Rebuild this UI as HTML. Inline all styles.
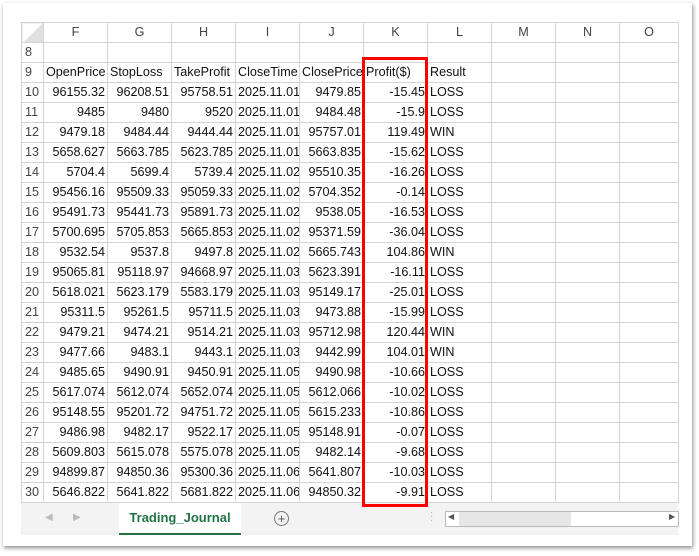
<!DOCTYPE html><html><head><style>
body{margin:0;width:699px;height:556px;background:#fff;position:relative;overflow:hidden;font-family:"Liberation Sans",sans-serif;}
.card{position:absolute;left:3px;top:3px;width:689px;height:543px;background:#fff;box-shadow:1px 2px 4px rgba(0,0,0,.45);}
table{position:absolute;left:21px;top:22px;width:657px;border-collapse:collapse;table-layout:fixed;font-size:12.6px;color:#111;}
td{height:19px;padding:0 2px;border:1px solid #d4d4d4;white-space:nowrap;overflow:hidden;text-overflow:clip;line-height:19px;}
tr.h td{background:#fff;color:#444;text-align:center;border-color:#d4d4d4;}
td.rh{text-align:left;color:#444;padding-left:3px;}
td.n{text-align:right}
.red{position:absolute;left:362px;top:57px;width:60px;height:444px;border:3px solid #f00;}
.tabbar{position:absolute;left:21px;top:503px;width:657px;height:32px;background:#f3f3f3;}
</style></head><body>
<div class="card"></div>
<table>
<colgroup><col style="width:22px"><col style="width:64px"><col style="width:64px"><col style="width:64px"><col style="width:64px"><col style="width:64px"><col style="width:64px"><col style="width:64px"><col style="width:64px"><col style="width:64px"><col style="width:59px"></colgroup>
<tr class="h"><td style="background:linear-gradient(135deg,#fff 50%,#e0e0e0 50%)"></td><td>F</td><td>G</td><td>H</td><td>I</td><td>J</td><td>K</td><td>L</td><td>M</td><td>N</td><td>O</td></tr>
<tr><td class="rh">8</td><td></td><td></td><td></td><td></td><td></td><td></td><td></td><td></td><td></td><td></td></tr>
<tr><td class="rh">9</td><td>OpenPrice</td><td>StopLoss</td><td>TakeProfit</td><td>CloseTime</td><td>ClosePrice</td><td>Profit($)</td><td>Result</td><td></td><td></td><td></td></tr>
<tr><td class="rh">10</td><td class="n">96155.32</td><td class="n">96208.51</td><td class="n">95758.51</td><td>2025.11.01</td><td class="n">9479.85</td><td class="n">-15.45</td><td>LOSS</td><td></td><td></td><td></td></tr>
<tr><td class="rh">11</td><td class="n">9485</td><td class="n">9480</td><td class="n">9520</td><td>2025.11.01</td><td class="n">9484.48</td><td class="n">-15.9</td><td>LOSS</td><td></td><td></td><td></td></tr>
<tr><td class="rh">12</td><td class="n">9479.18</td><td class="n">9484.44</td><td class="n">9444.44</td><td>2025.11.01</td><td class="n">95757.01</td><td class="n">119.49</td><td>WIN</td><td></td><td></td><td></td></tr>
<tr><td class="rh">13</td><td class="n">5658.627</td><td class="n">5663.785</td><td class="n">5623.785</td><td>2025.11.01</td><td class="n">5663.835</td><td class="n">-15.62</td><td>LOSS</td><td></td><td></td><td></td></tr>
<tr><td class="rh">14</td><td class="n">5704.4</td><td class="n">5699.4</td><td class="n">5739.4</td><td>2025.11.02</td><td class="n">95510.35</td><td class="n">-16.26</td><td>LOSS</td><td></td><td></td><td></td></tr>
<tr><td class="rh">15</td><td class="n">95456.16</td><td class="n">95509.33</td><td class="n">95059.33</td><td>2025.11.02</td><td class="n">5704.352</td><td class="n">-0.14</td><td>LOSS</td><td></td><td></td><td></td></tr>
<tr><td class="rh">16</td><td class="n">95491.73</td><td class="n">95441.73</td><td class="n">95891.73</td><td>2025.11.02</td><td class="n">9538.05</td><td class="n">-16.53</td><td>LOSS</td><td></td><td></td><td></td></tr>
<tr><td class="rh">17</td><td class="n">5700.695</td><td class="n">5705.853</td><td class="n">5665.853</td><td>2025.11.02</td><td class="n">95371.59</td><td class="n">-36.04</td><td>LOSS</td><td></td><td></td><td></td></tr>
<tr><td class="rh">18</td><td class="n">9532.54</td><td class="n">9537.8</td><td class="n">9497.8</td><td>2025.11.02</td><td class="n">5665.743</td><td class="n">104.86</td><td>WIN</td><td></td><td></td><td></td></tr>
<tr><td class="rh">19</td><td class="n">95065.81</td><td class="n">95118.97</td><td class="n">94668.97</td><td>2025.11.03</td><td class="n">5623.391</td><td class="n">-16.11</td><td>LOSS</td><td></td><td></td><td></td></tr>
<tr><td class="rh">20</td><td class="n">5618.021</td><td class="n">5623.179</td><td class="n">5583.179</td><td>2025.11.03</td><td class="n">95149.17</td><td class="n">-25.01</td><td>LOSS</td><td></td><td></td><td></td></tr>
<tr><td class="rh">21</td><td class="n">95311.5</td><td class="n">95261.5</td><td class="n">95711.5</td><td>2025.11.03</td><td class="n">9473.88</td><td class="n">-15.99</td><td>LOSS</td><td></td><td></td><td></td></tr>
<tr><td class="rh">22</td><td class="n">9479.21</td><td class="n">9474.21</td><td class="n">9514.21</td><td>2025.11.03</td><td class="n">95712.98</td><td class="n">120.44</td><td>WIN</td><td></td><td></td><td></td></tr>
<tr><td class="rh">23</td><td class="n">9477.66</td><td class="n">9483.1</td><td class="n">9443.1</td><td>2025.11.03</td><td class="n">9442.99</td><td class="n">104.01</td><td>WIN</td><td></td><td></td><td></td></tr>
<tr><td class="rh">24</td><td class="n">9485.65</td><td class="n">9490.91</td><td class="n">9450.91</td><td>2025.11.05</td><td class="n">9490.98</td><td class="n">-10.66</td><td>LOSS</td><td></td><td></td><td></td></tr>
<tr><td class="rh">25</td><td class="n">5617.074</td><td class="n">5612.074</td><td class="n">5652.074</td><td>2025.11.05</td><td class="n">5612.066</td><td class="n">-10.02</td><td>LOSS</td><td></td><td></td><td></td></tr>
<tr><td class="rh">26</td><td class="n">95148.55</td><td class="n">95201.72</td><td class="n">94751.72</td><td>2025.11.05</td><td class="n">5615.233</td><td class="n">-10.86</td><td>LOSS</td><td></td><td></td><td></td></tr>
<tr><td class="rh">27</td><td class="n">9486.98</td><td class="n">9482.17</td><td class="n">9522.17</td><td>2025.11.05</td><td class="n">95148.91</td><td class="n">-0.07</td><td>LOSS</td><td></td><td></td><td></td></tr>
<tr><td class="rh">28</td><td class="n">5609.803</td><td class="n">5615.078</td><td class="n">5575.078</td><td>2025.11.05</td><td class="n">9482.14</td><td class="n">-9.68</td><td>LOSS</td><td></td><td></td><td></td></tr>
<tr><td class="rh">29</td><td class="n">94899.87</td><td class="n">94850.36</td><td class="n">95300.36</td><td>2025.11.06</td><td class="n">5641.807</td><td class="n">-10.03</td><td>LOSS</td><td></td><td></td><td></td></tr>
<tr><td class="rh">30</td><td class="n">5646.822</td><td class="n">5641.822</td><td class="n">5681.822</td><td>2025.11.06</td><td class="n">94850.32</td><td class="n">-9.91</td><td>LOSS</td><td></td><td></td><td></td></tr>
</table>
<div class="tabbar">
<div style="position:absolute;left:24px;top:9px;color:#bbb;font-size:10px">&#9664;</div>
<div style="position:absolute;left:52px;top:9px;color:#bbb;font-size:10px">&#9654;</div>
<div style="position:absolute;left:98px;top:0;width:122px;height:30px;background:#fff;border-bottom:2px solid #217346;color:#217346;font-weight:bold;font-size:13px;text-align:center;line-height:30px">Trading_Journal</div>
<div style="position:absolute;left:253px;top:8px;width:13px;height:13px;border:1px solid #777;border-radius:50%;color:#555;font-size:13px;line-height:13px;text-align:center">+</div>
<div style="position:absolute;left:409px;top:8px;color:#aaa;font-size:10px;line-height:4px">·<br>·<br>·</div>
<div style="position:absolute;left:424px;top:8px;width:232px;height:14px;background:#fff;border:1px solid #bbb"></div>
<div style="position:absolute;left:438px;top:9px;width:112px;height:14px;background:#e6e6e6"></div>
<div style="position:absolute;left:427px;top:9px;font-size:8px;color:#555">&#9664;</div>
<div style="position:absolute;left:648px;top:9px;font-size:8px;color:#555">&#9654;</div>
</div>
<div class="red"></div>
</body></html>
